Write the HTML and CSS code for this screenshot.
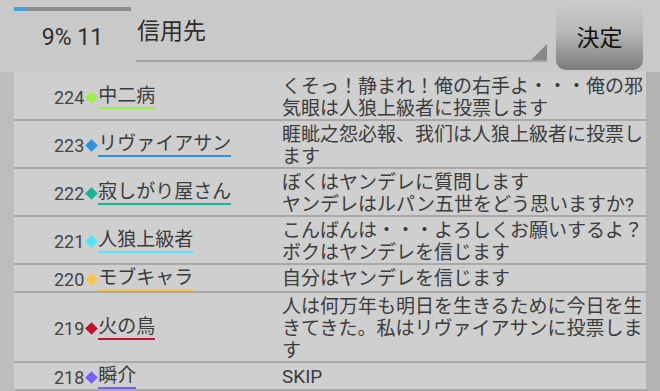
FILE: index.html
```html
<!DOCTYPE html>
<html lang="ja">
  <head>
    <meta charset="UTF-8" />
    <meta name="viewport" content="width=device-width, initial-scale=1.0" />
    <title>投票</title>
    <link rel="stylesheet" href="styles.css">
  </head>
  <body>
    <div class="screen">
      <!-- top bar: progress, target spinner, decide button -->
      <header class="top">
        <div class="status">
          <div class="progress"><div class="progress-fill"></div></div>
          <div class="count">9% 11</div>
        </div>
        <div class="spinner">
          <span class="spinner-label">信用先</span>
          <span class="spinner-arrow"></span>
        </div>
        <button class="decide">決定</button>
      </header>

      <div class="main">
        <div class="gutter-left"></div>
        <ul class="log">
          <li class="row">
            <div class="who"><span class="num">224</span><span class="mark lime"></span><span class="name lime">中二病</span></div>
            <div class="msg">くそっ！静まれ！俺の右手よ・・・俺の邪気眼は人狼上級者に投票します</div>
          </li>
          <li class="row">
            <div class="who"><span class="num">223</span><span class="mark blue"></span><span class="name blue">リヴァイアサン</span></div>
            <div class="msg">睚眦之怨必報、我们は人狼上級者に投票します</div>
          </li>
          <li class="row">
            <div class="who"><span class="num">222</span><span class="mark teal"></span><span class="name teal">寂しがり屋さん</span></div>
            <div class="msg">ぼくはヤンデレに質問します<br>ヤンデレはルパン五世をどう思いますか?</div>
          </li>
          <li class="row">
            <div class="who"><span class="num">221</span><span class="mark cyan"></span><span class="name cyan">人狼上級者</span></div>
            <div class="msg">こんばんは・・・よろしくお願いするよ？<br>ボクはヤンデレを信じます</div>
          </li>
          <li class="row">
            <div class="who"><span class="num">220</span><span class="mark yellow"></span><span class="name yellow">モブキャラ</span></div>
            <div class="msg">自分はヤンデレを信じます</div>
          </li>
          <li class="row">
            <div class="who"><span class="num">219</span><span class="mark red"></span><span class="name red">火の鳥</span></div>
            <div class="msg">人は何万年も明日を生きるために今日を生きてきた。私はリヴァイアサンに投票します</div>
          </li>
          <li class="row">
            <div class="who"><span class="num">218</span><span class="mark purple"></span><span class="name purple">瞬介</span></div>
            <div class="msg">SKIP</div>
          </li>
        </ul>
        <div class="gutter-right"></div>
      </div>
    </div>
  </body>
</html>
```

FILE: styles.css
```css
html,
body {
  margin: 0;
  height: 100%;
  overflow: hidden;
}
body {
  font-family: Roboto, "Noto Sans CJK JP", sans-serif;
  background-color: #c9c9c9;
  color: #3c3c3c;
}
.screen {
  display: flex;
  flex-direction: column;
  height: 100%;
}

/* top bar */
.top {
  display: flex;
  height: 72px;
  padding-left: 14px;
  box-sizing: border-box;
}
.status {
  width: 117px;
  margin-right: 5px;
  padding-top: 7px;
}
.progress {
  height: 4px;
  background-color: #8e8e8e;
}
.progress-fill {
  width: 11px;
  height: 100%;
  background-color: #3ba7de;
}
.count {
  margin-top: 14px;
  text-align: center;
  font-size: 23px;
  line-height: 26px;
  color: #2e2e2e;
}
.spinner {
  display: flex;
  width: 411px;
  height: 62px;
  margin-right: 9px;
  border-bottom: 2px solid #a2a2a2;
  box-sizing: border-box;
}
.spinner-label {
  flex: 1;
  padding: 18px 0 0 1px;
  font-size: 23px;
  line-height: 28px;
  color: #2e2e2e;
}
.spinner-arrow {
  align-self: flex-end;
  width: 0;
  height: 0;
  border-left: 16px solid transparent;
  border-bottom: 16px solid #898989;
}
.decide {
  width: 87px;
  height: 69px;
  margin-top: 1px;
  padding: 0;
  border: none;
  border-radius: 10px;
  background: linear-gradient(to bottom, #cbcbcb 0%, #b8b8b8 45%, #7b7b7b 100%);
  font-family: "Noto Sans CJK JP", sans-serif;
  font-size: 23px;
  color: #111;
}

/* vote log */
.main {
  display: flex;
  flex: 1;
  min-height: 0;
}
.gutter-left {
  width: 14px;
  background-color: #bdbdbd;
}
.gutter-right {
  width: 14px;
  background-color: #b3b3b3;
}
.log {
  flex: 1;
  margin: 0;
  padding: 1px 0 0;
  list-style: none;
  background-color: #cfcfcf;
  overflow: hidden;
}
.row {
  display: flex;
  padding: 2px 0 0;
  border-bottom: 2px solid #a9a9a9;
}
.who {
  display: flex;
  align-items: center;
  width: 268px;
  padding-left: 40px;
  box-sizing: border-box;
}
.num {
  font-size: 18px;
  color: #444;
}
.mark {
  width: 9px;
  height: 9px;
  margin: 0 2.5px;
  transform: rotate(45deg);
}
.name {
  font-size: 19px;
  line-height: 22px;
  color: #3b3b3b;
  border-bottom: 2px solid;
}
.msg {
  flex: 1;
  padding-top: 1px;
  margin-bottom: -1px;
  font-size: 19px;
  line-height: 22px;
}

.mark.lime { background-color: #9cf04a; }
.mark.blue { background-color: #3290e0; }
.mark.teal { background-color: #14b791; }
.mark.cyan { background-color: #4fe6f7; }
.mark.yellow { background-color: #f6c84a; }
.mark.red { background-color: #c4102c; }
.mark.purple { background-color: #7a5ef3; }
.name.lime { border-bottom-color: #9cf04a; }
.name.blue { border-bottom-color: #3290e0; }
.name.teal { border-bottom-color: #14b791; }
.name.cyan { border-bottom-color: #4fe6f7; }
.name.yellow { border-bottom-color: #f6c84a; }
.name.red { border-bottom-color: #c4102c; }
.name.purple { border-bottom-color: #7a5ef3; }
```
